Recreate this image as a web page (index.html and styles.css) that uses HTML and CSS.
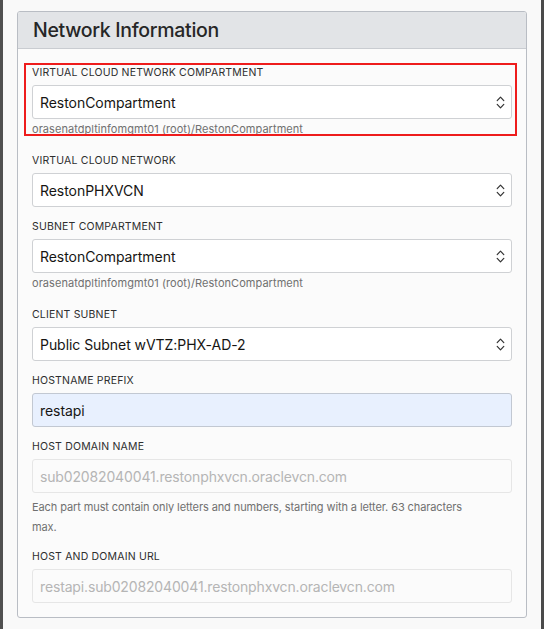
FILE: index.html
```html
<!DOCTYPE html>
<html lang="en">
<head>
<meta charset="utf-8">
<title>Network Information</title>
<link rel="stylesheet" href="styles.css">
</head>
<body>
<main class="page">
  <section class="panel">
    <header class="panel-header">
      <h2 class="panel-title">Network Information</h2>
    </header>
    <div class="panel-body">
      <div class="field field-highlighted">
        <label class="field-label">Virtual Cloud Network Compartment</label>
        <div class="select">
          <span class="select-value">RestonCompartment</span>
          <svg class="chevrons" width="9" height="15" viewBox="0 0 9 15" aria-hidden="true"><path d="M1.2 5.6 L4.5 2.2 L7.8 5.6 M1.2 9.4 L4.5 12.8 L7.8 9.4" fill="none" stroke="#333333" stroke-width="1.2" stroke-linecap="round" stroke-linejoin="round"/></svg>
        </div>
        <div class="field-help">orasenatdpltinfomgmt01 (root)/RestonCompartment</div>
        <div class="highlight-box"></div>
      </div>

      <div class="field">
        <label class="field-label">Virtual Cloud Network</label>
        <div class="select">
          <span class="select-value">RestonPHXVCN</span>
          <svg class="chevrons" width="9" height="15" viewBox="0 0 9 15" aria-hidden="true"><path d="M1.2 5.6 L4.5 2.2 L7.8 5.6 M1.2 9.4 L4.5 12.8 L7.8 9.4" fill="none" stroke="#333333" stroke-width="1.2" stroke-linecap="round" stroke-linejoin="round"/></svg>
        </div>
      </div>

      <div class="field">
        <label class="field-label">Subnet Compartment</label>
        <div class="select">
          <span class="select-value">RestonCompartment</span>
          <svg class="chevrons" width="9" height="15" viewBox="0 0 9 15" aria-hidden="true"><path d="M1.2 5.6 L4.5 2.2 L7.8 5.6 M1.2 9.4 L4.5 12.8 L7.8 9.4" fill="none" stroke="#333333" stroke-width="1.2" stroke-linecap="round" stroke-linejoin="round"/></svg>
        </div>
        <div class="field-help">orasenatdpltinfomgmt01 (root)/RestonCompartment</div>
      </div>

      <div class="field">
        <label class="field-label">Client Subnet</label>
        <div class="select">
          <span class="select-value">Public Subnet wVTZ:PHX-AD-2</span>
          <svg class="chevrons" width="9" height="15" viewBox="0 0 9 15" aria-hidden="true"><path d="M1.2 5.6 L4.5 2.2 L7.8 5.6 M1.2 9.4 L4.5 12.8 L7.8 9.4" fill="none" stroke="#333333" stroke-width="1.2" stroke-linecap="round" stroke-linejoin="round"/></svg>
        </div>
      </div>

      <div class="field">
        <label class="field-label">Hostname Prefix</label>
        <input class="text-input text-input-filled" type="text" value="restapi">
      </div>

      <div class="field">
        <label class="field-label">Host Domain Name</label>
        <input class="text-input" type="text" value="sub02082040041.restonphxvcn.oraclevcn.com" disabled>
        <div class="field-help field-help-wrap">Each part must contain only letters and numbers, starting with a letter. 63 characters max.</div>
      </div>

      <div class="field field-last">
        <label class="field-label">Host and Domain URL</label>
        <input class="text-input" type="text" value="restapi.sub02082040041.restonphxvcn.oraclevcn.com" disabled>
      </div>
    </div>
  </section>
</main>
</body>
</html>
```

FILE: styles.css
```css
* {
  box-sizing: border-box;
}

html, body {
  margin: 0;
  padding: 0;
}

body {
  width: 544px;
  height: 629px;
  overflow: hidden;
  background: #f9f9f9;
  border-left: 3px solid #505050;
  border-right: 3px solid #4a4a4a;
  font-family: "Inter", "Liberation Sans", sans-serif;
  color: #161513;
}

.page {
  padding: 11px 14px 0;
}

.panel {
  width: 510px;
  border: 1px solid #b9bdc4;
  border-radius: 3px;
  background: #fbfbfb;
}

.panel-header {
  height: 37px;
  background: #e2e4e7;
  border-bottom: 1px solid #c9ccd1;
  border-radius: 2px 2px 0 0;
  display: flex;
  align-items: center;
  padding-left: 15px;
}

.panel-title {
  margin: 0;
  font-size: 19.5px;
  font-weight: 500;
  color: #262626;
  letter-spacing: -0.3px;
}

.panel-body {
  padding: 17px 14px 14px;
}

.field {
  position: relative;
  margin-bottom: 13px;
}

.field-last {
  margin-bottom: 0;
}

.field-label {
  display: block;
  font-size: 10.5px;
  line-height: 14px;
  text-transform: uppercase;
  letter-spacing: 0.18px;
  color: #2e2e2e;
  margin-bottom: 5px;
}

.select {
  height: 34px;
  background: #ffffff;
  border: 1px solid #cfd1d4;
  border-radius: 3px;
  display: flex;
  align-items: center;
  justify-content: space-between;
  padding: 0 6px 0 7px;
}

.select-value {
  font-size: 14px;
  color: #161513;
  letter-spacing: -0.05px;
}

.chevrons {
  display: block;
}

.field-help {
  font-size: 11px;
  line-height: 20px;
  color: #707070;
  padding-bottom: 2px;
  letter-spacing: 0.05px;
}

.field-help-wrap {
  margin-top: 4px;
  max-width: 450px;
  padding-bottom: 0;
  letter-spacing: -0.1px;
}

.text-input {
  display: block;
  width: 100%;
  height: 34px;
  margin: 0;
  padding: 0 7px;
  font-family: "Inter", "Liberation Sans", sans-serif;
  font-size: 14px;
  letter-spacing: -0.15px;
  border: 1px solid #e6e6e6;
  border-radius: 3px;
  background: #fbfbfb;
  color: #b5b5b5;
  -webkit-text-fill-color: #b5b5b5;
  outline: none;
  opacity: 1;
}

.text-input-filled {
  background: #e8f0fe;
  border-color: #c2c8d2;
  color: #161513;
  -webkit-text-fill-color: #161513;
  letter-spacing: -0.05px;
}

.highlight-box {
  position: absolute;
  top: -3px;
  left: -8px;
  right: -5px;
  bottom: 5px;
  border: 2px solid #ee1c1c;
  pointer-events: none;
}
```
